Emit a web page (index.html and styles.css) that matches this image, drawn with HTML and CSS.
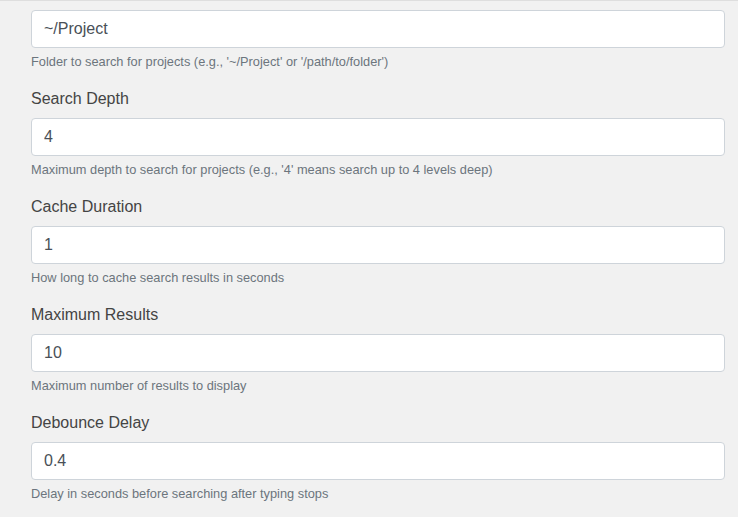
FILE: index.html
```html
<!DOCTYPE html>
<html>
<head>
<meta charset="utf-8">
<link rel="stylesheet" href="styles.css">
</head>
<body>
<div class="page">
  <div class="group">
    <input class="field" type="text" value="~/Project">
    <div class="help">Folder to search for projects (e.g., '~/Project' or '/path/to/folder')</div>
  </div>
  <div class="group">
    <label class="label">Search Depth</label>
    <input class="field" type="text" value="4">
    <div class="help">Maximum depth to search for projects (e.g., '4' means search up to 4 levels deep)</div>
  </div>
  <div class="group">
    <label class="label">Cache Duration</label>
    <input class="field" type="text" value="1">
    <div class="help">How long to cache search results in seconds</div>
  </div>
  <div class="group">
    <label class="label">Maximum Results</label>
    <input class="field" type="text" value="10">
    <div class="help">Maximum number of results to display</div>
  </div>
  <div class="group">
    <label class="label">Debounce Delay</label>
    <input class="field" type="text" value="0.4">
    <div class="help">Delay in seconds before searching after typing stops</div>
  </div>
</div>
</body>
</html>
```

FILE: styles.css
```css
html, body {
  margin: 0;
  padding: 0;
  background: #f1f1f1;
  font-family: "Liberation Sans", Arial, sans-serif;
}
.page {
  border-top: 1px solid #dedede;
  padding: 9px 13px 0 31px;
  height: 516px;
  overflow: hidden;
}
.group {
  display: flex;
  flex-direction: column;
  margin-bottom: 15px;
}
.label {
  display: block;
  font-size: 16px;
  line-height: 24px;
  color: #444;
  margin-bottom: 7px;
}
.field {
  box-sizing: border-box;
  width: 100%;
  height: 38px;
  margin: 0;
  padding: 6px 12px;
  font-family: "Liberation Sans", Arial, sans-serif;
  font-size: 16px;
  color: #495057;
  background: #fff;
  border: 1px solid #ced4da;
  border-radius: 4px;
  outline: none;
}
.help {
  margin-top: 4px;
  font-size: 12.8px;
  line-height: 20px;
  color: #6c757d;
}
```
